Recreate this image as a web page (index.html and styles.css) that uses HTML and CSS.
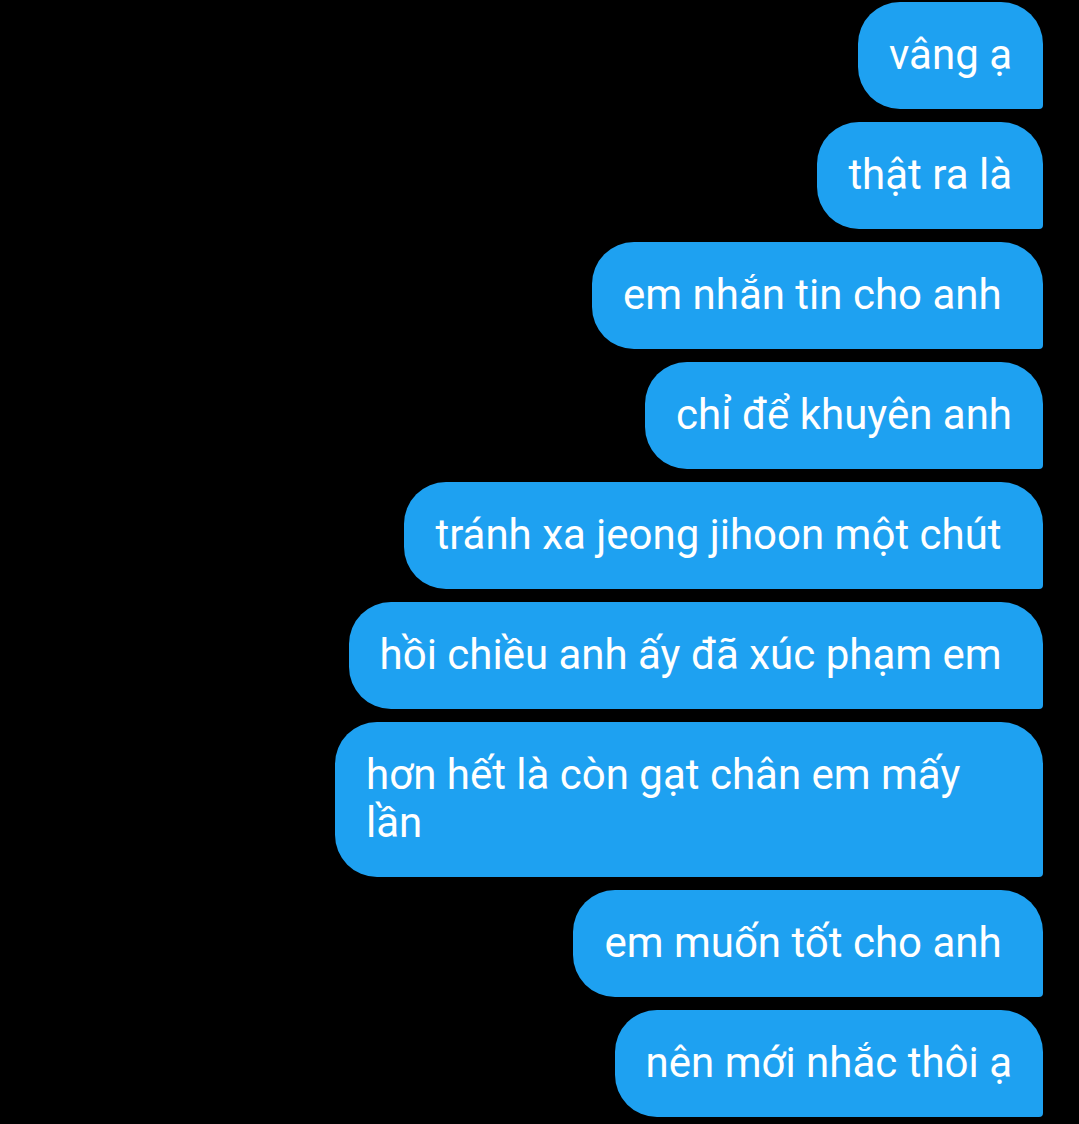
FILE: index.html
```html
<!DOCTYPE html>
<html lang="vi">
<head>
    <meta charset="UTF-8">
    <meta name="viewport" content="width=device-width, initial-scale=1.0">
    <title>Tin nhắn</title>
    <link rel="stylesheet" href="styles.css">
</head>
<body>
    <div class="thread">
        <div class="bubble">vâng ạ</div>
        <div class="bubble">thật ra là</div>
        <div class="bubble">em nhắn tin cho anh </div>
        <div class="bubble">chỉ để khuyên anh</div>
        <div class="bubble">tránh xa jeong jihoon một chút </div>
        <div class="bubble">hồi chiều anh ấy đã xúc phạm em </div>
        <div class="bubble">hơn hết là còn gạt chân em mấy lần</div>
        <div class="bubble">em muốn tốt cho anh </div>
        <div class="bubble">nên mới nhắc thôi ạ</div>
    </div>
</body>
</html>
```

FILE: styles.css
```css
* {
    margin: 0;
    padding: 0;
    box-sizing: border-box;
}

html, body {
    background: #000;
}

body {
    font-family: Roboto, 'Noto Sans', sans-serif;
    min-height: 100vh;
}

.thread {
    display: flex;
    flex-direction: column;
    align-items: flex-end;
    gap: 13px;
    padding: 2px 36px 0 0;
}

.bubble {
    background: #1ea1f1;
    color: #fff;
    font-size: 42px;
    line-height: 48px;
    padding: 29px 31px 30px;
    border-radius: 42px 42px 4px 42px;
    max-width: 708px;
    white-space: pre-wrap;
}
```
